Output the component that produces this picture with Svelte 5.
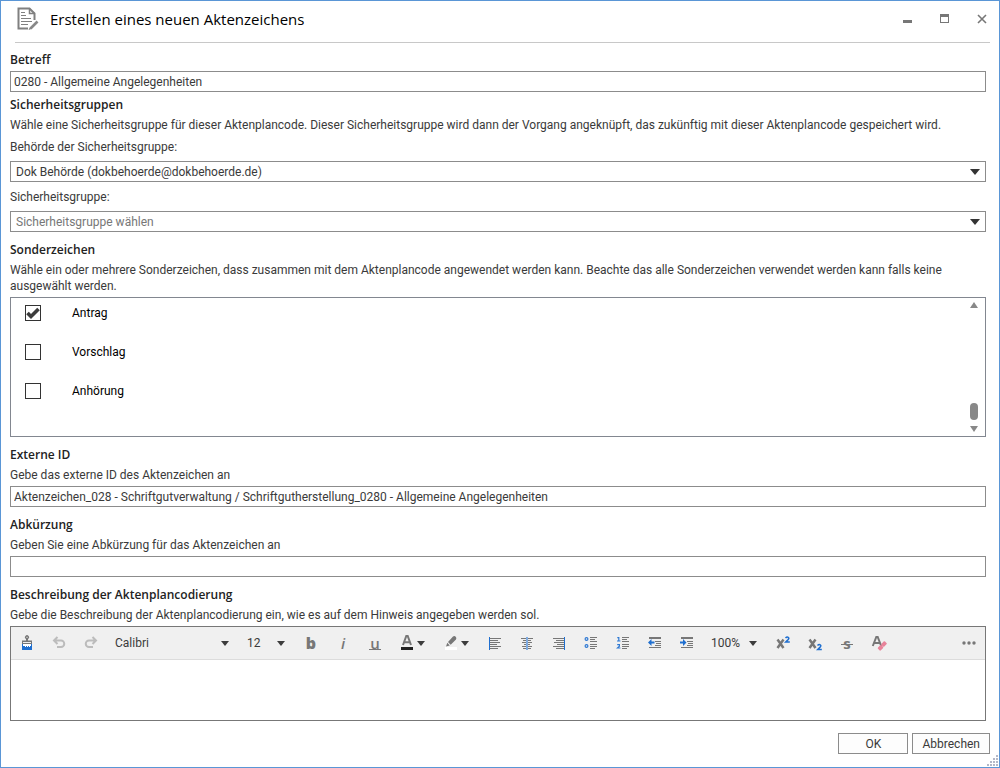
<script>
	let subject = $state('0280 - Allgemeine Angelegenheiten')
	let authority = $state('dok')
	let group = $state('')
	let externalId = $state('Aktenzeichen_028 - Schriftgutverwaltung / Schriftgutherstellung_0280 - Allgemeine Angelegenheiten')
	let abbreviation = $state('')
	let description = $state('')
	let font = $state('Calibri')
	let fontSize = $state('12')
	let zoom = $state('100%')

	let marks = $state([
		{id: 'antrag', label: 'Antrag', checked: true},
		{id: 'vorschlag', label: 'Vorschlag', checked: false},
		{id: 'anhoerung', label: 'Anhörung', checked: false}
	])
</script>

{#snippet arrow()}
	<svg class="arrow" width="8" height="5" viewBox="0 0 8 5" aria-hidden="true"><path d="M0 0h8L4 5z" fill="#3c3c3c"/></svg>
{/snippet}

{#snippet wideArrow()}
	<svg class="arrow" width="10" height="6" viewBox="0 0 10 6" aria-hidden="true"><path d="M0 0h10L5 6z" fill="#333"/></svg>
{/snippet}

<main class="window">
	<header>
		<svg class="doc" width="22" height="24" viewBox="0 0 22 24" fill="none" stroke="#808080" aria-hidden="true">
			<path d="M17.500 13V6.500L12.500 1.500H1.500V21.500H11" stroke-width="2"/>
			<path d="M12.500 1.500V6.500H17.500" stroke-width="1.500"/>
			<path d="M4 5.500h4M4 8.500h5M4 11.500h10M4 14.500h11M4 17.500h7" stroke-width="1.200"/>
			<path d="M20.500 14.500L13.500 21.500" stroke="#888" stroke-width="2.600"/>
			<path d="M12.800 20.500l-1.300 2.600 2.800-1z" fill="#777" stroke="none"/>
		</svg>
		<h1>Erstellen eines neuen Aktenzeichens</h1>
		<div class="controls">
			<button aria-label="Minimieren"><svg width="10" height="10" viewBox="0 0 10 10"><path d="M0 6h9v3H0z" fill="#777"/></svg></button>
			<button aria-label="Maximieren"><svg width="10" height="10" viewBox="0 0 10 10"><path d="M0 0h9v9H0zM1 3v5h7V3z" fill="#777" fill-rule="evenodd"/></svg></button>
			<button aria-label="Schließen"><svg width="10" height="10" viewBox="0 0 10 10"><path d="M1 1l8 8M9 1L1 9" stroke="#777" stroke-width="1.600"/></svg></button>
		</div>
	</header>

	<form onsubmit={e => e.preventDefault()}>
		<section>
			<h2><label for="subject">Betreff</label></h2>
			<input class="text" id="subject" type="text" bind:value={subject}/>
		</section>

		<section>
			<h2>Sicherheitsgruppen</h2>
			<p>Wähle eine Sicherheitsgruppe für dieser Aktenplancode. Dieser Sicherheitsgruppe wird dann der Vorgang angeknüpft, das zukünftig mit dieser Aktenplancode gespeichert wird.</p>
			<div class="field">
				<label for="authority">Behörde der Sicherheitsgruppe:</label>
				<div class="select">
					<select id="authority" bind:value={authority}>
						<option value="dok">Dok Behörde (dokbehoerde@dokbehoerde.de)</option>
					</select>
					{@render wideArrow()}
				</div>
			</div>
			<div class="field">
				<label for="group">Sicherheitsgruppe:</label>
				<div class="select">
					<select id="group" class:empty={!group} bind:value={group}>
						<option value="">Sicherheitsgruppe wählen</option>
					</select>
					{@render wideArrow()}
				</div>
			</div>
		</section>

		<section>
			<h2>Sonderzeichen</h2>
			<p>Wähle ein oder mehrere Sonderzeichen, dass zusammen mit dem Aktenplancode angewendet werden kann. Beachte das alle Sonderzeichen verwendet werden kann falls keine ausgewählt werden.</p>
			<div class="marks">
				<ul>
					{#each marks as mark (mark.id)}
						<li>
							<label>
								<span class="check">
									<input type="checkbox" bind:checked={mark.checked}/>
									<svg width="16" height="16" viewBox="0 0 16 16" aria-hidden="true"><path d="M2.500 8L6 11.500L13.500 4" fill="none" stroke="#3c3c3c" stroke-width="3.600"/></svg>
								</span>
								{mark.label}
							</label>
						</li>
					{/each}
				</ul>
				<div class="scroll" aria-hidden="true">
					<svg width="8" height="6" viewBox="0 0 8 6"><path d="M0 6h8L4 0z" fill="#888"/></svg>
					<span class="thumb"></span>
					<svg width="8" height="6" viewBox="0 0 8 6"><path d="M0 0h8L4 6z" fill="#888"/></svg>
				</div>
			</div>
		</section>

		<section>
			<h2>Externe ID</h2>
			<p><label for="external">Gebe das externe ID des Aktenzeichen an</label></p>
			<input class="text" id="external" type="text" bind:value={externalId}/>
		</section>

		<section>
			<h2>Abkürzung</h2>
			<p><label for="abbreviation">Geben Sie eine Abkürzung für das Aktenzeichen an</label></p>
			<input class="text" id="abbreviation" type="text" bind:value={abbreviation}/>
		</section>

		<section class="grow">
			<h2>Beschreibung der Aktenplancodierung</h2>
			<p><label for="description">Gebe die Beschreibung der Aktenplancodierung ein, wie es auf dem Hinweis angegeben werden sol.</label></p>
			<div class="editor">
				<div class="toolbar" role="toolbar" aria-label="Formatierung">
					<button type="button" aria-label="Format übertragen">
						<svg width="16" height="16" viewBox="0 0 16 16">
							<path d="M7 5.500V4a2 2 0 1 1 2 0v1.500h4V9H3V5.500z" fill="#777"/>
							<path d="M7.500 1.800h1v1.200h-1zM4 7h8v1H4z" fill="#eee"/>
							<path d="M3 9h10v6H3z" fill="#1f6fd0"/>
							<path d="M4 9h8v2h-1v1h-1v-1H9v1H8v-1H7v1H6v-1H4z" fill="#fff"/>
						</svg>
					</button>
					<button type="button" aria-label="Rückgängig">
						<svg width="16" height="16" viewBox="0 0 16 16" fill="none" stroke="#bcbcbc" stroke-width="2"><path d="M6.500 2L3 5.500L6.500 9M3 5.500h7a3 3 0 0 1 0 6.500H6"/></svg>
					</button>
					<button type="button" aria-label="Wiederholen">
						<svg width="16" height="16" viewBox="0 0 16 16" fill="none" stroke="#bcbcbc" stroke-width="2"><path d="M9.500 2L13 5.500L9.500 9M13 5.500H6a3 3 0 0 0 0 6.500h4"/></svg>
					</button>
					<div class="pick font">
						<select aria-label="Schriftart" bind:value={font}><option>Calibri</option></select>
						{@render arrow()}
					</div>
					<div class="pick size">
						<select aria-label="Schriftgröße" bind:value={fontSize}><option>12</option></select>
						{@render arrow()}
					</div>
					<button type="button" class="letter bold" aria-label="Fett">b</button>
					<button type="button" class="letter italic" aria-label="Kursiv">i</button>
					<button type="button" class="letter underline" aria-label="Unterstrichen">u</button>
					<button type="button" class="split" aria-label="Schriftfarbe">
						<svg width="16" height="16" viewBox="0 0 16 16">
							<path d="M4 10L7.300 1h1.400L12 10M5.200 7.300h5.600" fill="none" stroke="#777" stroke-width="2"/>
							<path d="M2 12h12v3H2z" fill="#222"/>
						</svg>
						{@render arrow()}
					</button>
					<button type="button" class="split" aria-label="Hervorhebung">
						<svg width="16" height="16" viewBox="0 0 16 16">
							<path d="M2 12h12v3H2z" fill="#fff"/>
							<path d="M5 7l5-5.500q1.500-1 2.700.2t.3 2.800L7.700 9.700zM4.300 7.800l2.500 2.600L3 11.500z" fill="#777"/>
						</svg>
						{@render arrow()}
					</button>
					<button type="button" aria-label="Linksbündig">
						<svg width="16" height="16" viewBox="0 0 16 16"><path d="M3 3h11v1H3zM3 5h8v1H3zM3 7h10v1H3zM3 9h7v1H3zM3 11h11v1H3zM3 13h8v1H3z" fill="#777"/><path d="M2 2h1v13H2z" fill="#1f6fd0"/></svg>
					</button>
					<button type="button" aria-label="Zentriert">
						<svg width="16" height="16" viewBox="0 0 16 16"><path d="M2 3h12v1H2zM4 5h8v1H4zM3 7h10v1H3zM5 9h6v1H5zM3 11h10v1H3zM4 13h8v1H4z" fill="#777"/><path d="M7 2h2v13H7z" fill="#7eabe2"/></svg>
					</button>
					<button type="button" aria-label="Rechtsbündig">
						<svg width="16" height="16" viewBox="0 0 16 16"><path d="M2 3h11v1H2zM5 5h8v1H5zM3 7h10v1H3zM6 9h7v1H6zM2 11h11v1H2zM5 13h8v1H5z" fill="#777"/><path d="M13 2h1v13h-1z" fill="#1f6fd0"/></svg>
					</button>
					<button type="button" aria-label="Aufzählung">
						<svg width="16" height="16" viewBox="0 0 16 16"><path d="M7 2h7v1H7zM7 4h5v1H7zM7 6h7v1H7zM7 9h7v1H7zM7 11h7v1H7zM7 13h5v1H7z" fill="#777"/><g fill="none" stroke="#2f79d3" stroke-width="1.200"><circle cx="3.500" cy="4" r="1.400"/><circle cx="3.500" cy="11" r="1.400"/></g></svg>
					</button>
					<button type="button" aria-label="Nummerierung">
						<svg width="16" height="16" viewBox="0 0 16 16"><path d="M7 2h7v1H7zM7 4h5v1H7zM7 6h7v1H7zM7 9h7v1H7zM7 11h7v1H7zM7 13h5v1H7z" fill="#777"/><path d="M2.300 2.600h1.500V6M2 6h3.400M2.200 9.600h2.200v1.600L2.500 13h2.900" fill="none" stroke="#2f79d3" stroke-width="1.200"/></svg>
					</button>
					<button type="button" aria-label="Einzug verkleinern">
						<svg width="16" height="16" viewBox="0 0 16 16"><path d="M2 2h12v2H2zM8 6h6v1H8zM9 8h5v1H9zM8 10h6v1H8zM2 12h12v1H2z" fill="#777"/><path d="M1 7.500L4.500 4v2.500h3v2h-3V11z" fill="#1f6fd0"/></svg>
					</button>
					<button type="button" aria-label="Einzug vergrößern">
						<svg width="16" height="16" viewBox="0 0 16 16"><path d="M2 2h12v2H2zM8 6h6v1H8zM9 8h5v1H9zM8 10h6v1H8zM2 12h12v1H2z" fill="#777"/><path d="M7.500 7.500L4 4v2.500H1v2h3V11z" fill="#1f6fd0"/></svg>
					</button>
					<div class="pick zoom">
						<select aria-label="Zoom" bind:value={zoom}><option>100%</option></select>
						{@render arrow()}
					</div>
					<button type="button" aria-label="Hochgestellt">
						<svg width="16" height="16" viewBox="0 0 16 16" fill="none"><path d="M2.500 4.500L8.500 13M8.500 4.500L2.500 13" stroke="#777" stroke-width="2.500"/><path d="M10.500 3q1.500-1.500 2.700-.7t0 2.200L10.800 7h4" stroke="#1f6fd0" stroke-width="1.600"/></svg>
					</button>
					<button type="button" aria-label="Tiefgestellt">
						<svg width="16" height="16" viewBox="0 0 16 16" fill="none"><path d="M2.500 4.500L8.500 13M8.500 4.500L2.500 13" stroke="#777" stroke-width="2.500"/><path d="M10.500 10.500q1.500-1.500 2.700-.7t0 2.200L10.800 14.500h4" stroke="#1f6fd0" stroke-width="1.600"/></svg>
					</button>
					<button type="button" class="letter strike" aria-label="Durchgestrichen">s</button>
					<button type="button" aria-label="Formatierung löschen">
						<svg width="16" height="16" viewBox="0 0 16 16"><path d="M1.800 11L5.300 2h1.400l3.500 9M3 8h6" fill="none" stroke="#777" stroke-width="2"/><g fill="#e8839a"><rect x="10.500" y="7" width="5" height="4" rx="1" transform="rotate(-45 13 9)"/><rect x="7" y="10.800" width="5" height="4" rx="1" transform="rotate(-45 9.500 12.800)"/></g></svg>
					</button>
					<button type="button" class="more" aria-label="Mehr">
						<svg width="16" height="16" viewBox="0 0 16 16" fill="#777"><circle cx="3" cy="8" r="1.700"/><circle cx="8" cy="8" r="1.700"/><circle cx="13" cy="8" r="1.700"/></svg>
					</button>
				</div>
				<textarea id="description" bind:value={description}></textarea>
			</div>
		</section>

		<footer>
			<button type="submit">OK</button>
			<button type="button">Abbrechen</button>
		</footer>
	</form>

	<svg class="grip" width="12" height="12" viewBox="0 0 12 12" fill="#b4b8c8" aria-hidden="true">
		<path d="M9 0h2v2H9zM6 3h2v2H6zM9 3h2v2H9zM3 6h2v2H3zM6 6h2v2H6zM9 6h2v2H9zM0 9h2v2H0zM3 9h2v2H3zM6 9h2v2H6zM9 9h2v2H9z"/>
	</svg>
</main>

<style>
	:global(body) {
		background: #fff;
	}

	.window {
		position: relative;
		display: flex;
		flex-direction: column;
		box-sizing: border-box;
		min-height: 100vh;
		border: 1px solid #5a96d6;
		background: #fff;
		color: #3a3a3a;
		font: 12px/16px "Segoe UI", Roboto, sans-serif;
	}

	button, input, select, textarea {
		box-sizing: border-box;
		margin: 0;
		font: inherit;
		color: inherit;
		border-radius: 0;
	}

	header {
		display: flex;
		align-items: center;
		height: 41px;
		margin: 0 9px 0 14px;
		border-bottom: 1px solid #c8c8c8;
	}

	.doc {
		margin: 0 11px 6px 2px;
	}

	h1, h2 {
		font-family: "Segoe UI", "Open Sans", sans-serif;
	}

	h1 {
		flex: 1;
		margin: 0 0 6px;
		font-size: 15px;
		line-height: 20px;
		font-weight: 400;
		color: #000;
	}

	.controls {
		display: flex;
		gap: 13px;
		margin: 0 -4px 6px 0;
	}

	.controls button {
		display: flex;
		align-items: center;
		justify-content: center;
		width: 24px;
		height: 24px;
		padding: 0;
		border: 0;
		background: none;
	}

	form {
		display: flex;
		flex-direction: column;
		flex: 1;
		padding: 7px 13px 13px 9px;
	}

	section {
		margin-bottom: 8px;
	}

	section:first-child {
		margin-bottom: 3px;
	}

	.grow {
		display: flex;
		flex-direction: column;
		flex: 1;
		margin-bottom: 12px;
	}

	h2 {
		margin: 0;
		font-size: 12px;
		line-height: 20px;
		font-weight: 600;
		color: #222;
	}

	p {
		margin: 0;
		padding: 2px 0;
	}

	.text {
		display: block;
		width: 100%;
		height: 21px;
		margin-top: 1px;
		padding: 0 3px;
		border: 1px solid #8c8c8c;
		background: #fff;
	}

	.field {
		padding-top: 4px;
	}

	.field + .field {
		padding-top: 7px;
	}

	.field label {
		display: block;
	}

	.select {
		position: relative;
		margin-top: 6px;
	}

	select {
		display: block;
		appearance: none;
		width: 100%;
		height: 21px;
		padding: 0 24px 0 5px;
		border: 1px solid #8c8c8c;
		background: #fff;
	}

	select.empty {
		color: #777;
	}

	.select .arrow {
		position: absolute;
		right: 6px;
		top: 8px;
		pointer-events: none;
	}

	.marks {
		display: flex;
		box-sizing: border-box;
		height: 140px;
		margin-top: 1px;
		border: 1px solid #828790;
	}

	ul {
		flex: 1;
		display: flex;
		flex-direction: column;
		gap: 9px;
		margin: 0;
		padding: 0 14px;
		list-style: none;
		color: #000;
	}

	li label {
		display: flex;
		align-items: center;
		gap: 31px;
		height: 30px;
	}

	.check {
		display: grid;
	}

	.check > * {
		grid-area: 1 / 1;
	}

	.check input {
		appearance: none;
		width: 16px;
		height: 16px;
		border: 1px solid #333;
		background: #fff;
	}

	.check svg {
		visibility: hidden;
		pointer-events: none;
	}

	.check input:checked + svg {
		visibility: visible;
	}

	.scroll {
		display: flex;
		flex-direction: column;
		align-items: center;
		width: 22px;
		padding: 4px 0;
	}

	.thumb {
		width: 8px;
		height: 17px;
		margin: auto 0 6px;
		border-radius: 4px;
		background: #888;
	}

	.editor {
		display: flex;
		flex-direction: column;
		flex: 1;
		margin-top: 1px;
		border: 1px solid #777;
	}

	.toolbar {
		display: flex;
		align-items: center;
		height: 32px;
		border-bottom: 1px solid #dcdcdc;
		background: #f0f0f0;
	}

	.toolbar button {
		position: relative;
		display: flex;
		align-items: center;
		justify-content: center;
		width: 32px;
		height: 32px;
		padding: 0;
		border: 0;
		background: none;
	}

	.toolbar .split {
		width: 44px;
		padding: 0 10px 0 8px;
		gap: 2px;
	}

	.toolbar .more {
		margin-left: auto;
	}

	.toolbar .letter {
		color: #777;
		font: 600 15px/20px "Segoe UI", "Open Sans", sans-serif;
	}

	.toolbar .bold {
		font-size: 16px;
		font-weight: 800;
	}

	.toolbar .italic {
		font-style: italic;
	}

	.toolbar .strike {
		font-weight: 700;
	}

	/* the bars reach past the letter on both sides */
	.underline::after,
	.strike::after {
		content: "";
		position: absolute;
		left: 10px;
		right: 10px;
		height: 1px;
		background: #777;
	}

	.underline::after {
		bottom: 9px;
	}

	.strike::after {
		top: 17px;
	}

	.pick {
		position: relative;
	}

	.pick select {
		border: 0;
		padding: 0 16px 0 8px;
		background: none;
	}

	.pick .arrow {
		position: absolute;
		right: 10px;
		top: 8px;
		pointer-events: none;
	}

	.font {
		width: 132px;
	}

	.size {
		width: 56px;
	}

	.zoom {
		width: 64px;
	}

	textarea {
		flex: 1;
		display: block;
		width: 100%;
		min-height: 60px;
		padding: 4px;
		border: 0;
		resize: none;
	}

	footer {
		display: flex;
		justify-content: flex-end;
		gap: 4px;
		margin-right: -4px;
	}

	footer button {
		min-width: 70px;
		height: 21px;
		padding: 0 9px;
		border: 1px solid #8c8c8c;
		background: #fdfdfd;
	}

	.grip {
		position: absolute;
		right: 0;
		bottom: 0;
	}
</style>
